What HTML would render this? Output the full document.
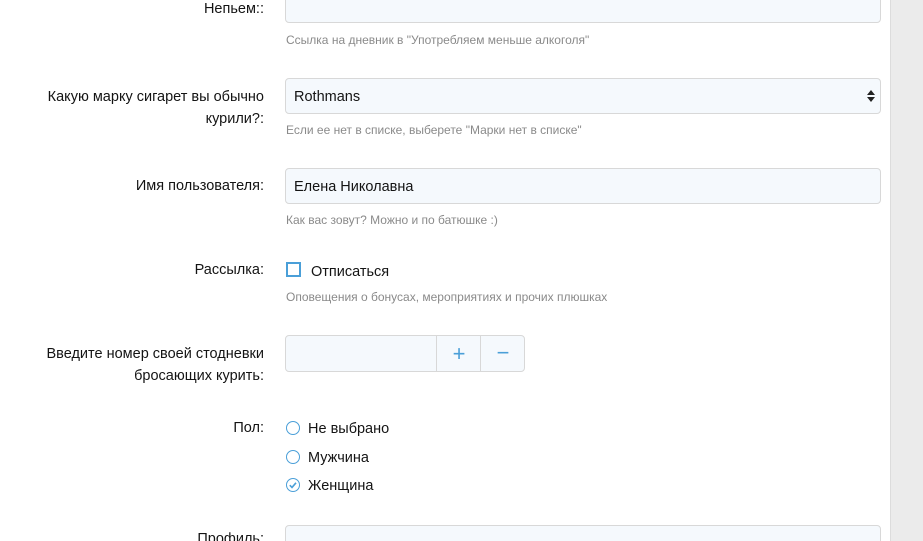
<!DOCTYPE html><html><head><meta charset="utf-8"><style>
html,body{margin:0;width:923px;height:541px;overflow:hidden}
body{background:#fff;font-family:"Liberation Sans","DejaVu Sans",sans-serif;color:#141414;position:relative}
.side{position:absolute;left:890px;top:0;width:33px;height:541px;background:#ebebeb;border-left:1px solid #dcdcdc}
.inp{position:absolute;left:285px;width:596px;height:34px;background:#f5f9fd;border:1px solid #d8d8d8;border-radius:4px;box-sizing:border-box;font-size:14.5px;line-height:34px;padding-left:8px}
.lbl{position:absolute;right:659px;text-align:right;font-size:14.5px;line-height:22px}
.hint{position:absolute;left:286px;font-size:12px;color:#8a8a8a}
.opt{position:absolute;left:286px;font-size:14.5px;line-height:18px}
.rad{display:inline-block;width:12px;height:12px;border:1.8px solid #4a9fd8;border-radius:50%;vertical-align:-2px;margin-right:8px;position:relative}
</style></head><body>
<div class="side"></div>
<div class="lbl" style="top:-2px">Непьем::</div>
<div class="inp" style="top:-12px;height:35px"></div>
<div class="hint" style="top:33px">Ссылка на дневник в "Употребляем меньше алкоголя"</div>

<div class="lbl" style="top:86px">Какую марку сигарет вы обычно<br>курили?:</div>
<div class="inp" style="top:78px;height:36px;line-height:36px">Rothmans<svg width="8" height="13" style="position:absolute;right:5px;top:11px"><path d="M4 0 L8 5 L0 5Z M0 7 L8 7 L4 12Z" fill="#222"/></svg></div>
<div class="hint" style="top:123px">Если ее нет в списке, выберете "Марки нет в списке"</div>

<div class="lbl" style="top:175px">Имя пользователя:</div>
<div class="inp" style="top:168px;height:36px;line-height:36px">Елена Николавна</div>
<div class="hint" style="top:213px">Как вас зовут? Можно и по батюшке :)</div>

<div class="lbl" style="top:259px">Рассылка:</div>
<div class="opt" style="top:262px"><span style="display:inline-block;width:11px;height:11px;border:2px solid #4a9fd8;vertical-align:-1px;margin-right:10px"></span>Отписаться</div>
<div class="hint" style="top:290px">Оповещения о бонусах, мероприятиях и прочих плюшках</div>

<div class="lbl" style="top:343px">Введите номер своей стодневки<br>бросающих курить:</div>
<div class="inp" style="top:335px;width:240px;height:37px;padding:0">
<div style="position:absolute;left:150px;top:0;width:44px;height:35px;border-left:1px solid #d8d8d8;color:#4a9fd8;font-size:22px;text-align:center;line-height:35px">+</div>
<div style="position:absolute;left:194px;top:0;width:44px;height:35px;border-left:1px solid #d8d8d8;color:#4a9fd8;font-size:22px;text-align:center;line-height:33px">−</div></div>

<div class="lbl" style="top:417px">Пол:</div>
<div class="opt" style="top:420px"><span class="rad"></span>Не выбрано</div>
<div class="opt" style="top:449px"><span class="rad"></span>Мужчина</div>
<div class="opt" style="top:477px"><span class="rad"><svg width="12" height="12" style="position:absolute;left:0;top:0"><path d="M2.8 6.2 L5 8.4 L9 3.8" fill="none" stroke="#4a9fd8" stroke-width="1.6"/></svg></span>Женщина</div>

<div class="lbl" style="top:528px">Профиль:</div>
<div class="inp" style="top:525px"></div>
</body></html>
